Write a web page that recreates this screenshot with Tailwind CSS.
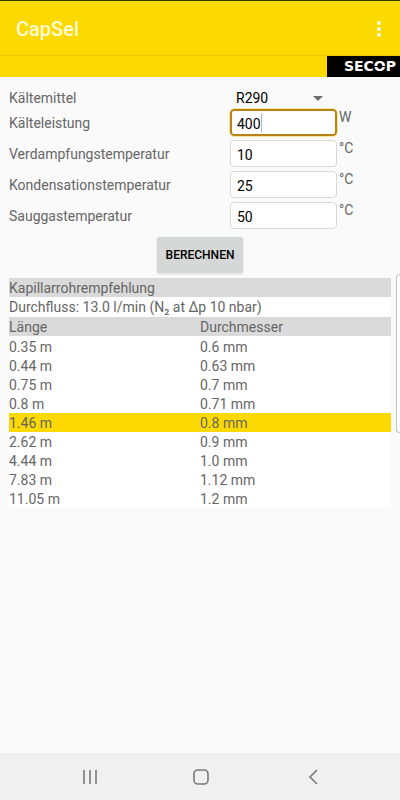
<!DOCTYPE html>
<html lang="de">
<head>
  <meta charset="UTF-8" />
  <title>CapSel</title>
  <meta name="viewport" content="width=device-width, initial-scale=1.0" />
  <script src="https://cdn.jsdelivr.net/npm/@tailwindcss/browser@4"></script>
</head>
<body class="relative flex flex-col min-h-screen bg-[#fafafa] text-sm text-[#666] font-['Roboto',sans-serif]">

  <!-- App bar -->
  <header class="flex items-center justify-between h-14 pt-0.5 pl-4 pr-[15px] bg-[#fcd900] border-t border-[#2b3a0a] border-b border-b-[#ecca00]">
    <h1 class="text-xl font-medium text-[#fffbd6]">CapSel</h1>
    <button type="button" aria-label="Menü" class="p-0">
      <svg width="12" height="18" viewBox="0 0 12 18" fill="#fffde8">
        <circle cx="6" cy="3" r="2" />
        <circle cx="6" cy="9" r="2" />
        <circle cx="6" cy="15" r="2" />
      </svg>
    </button>
  </header>

  <!-- Logo -->
  <div class="flex justify-end h-[21px] bg-[#fcd900]">
    <div class="relative w-[73px] pr-1 bg-black text-white text-right text-sm leading-[21px] font-bold font-['DejaVu_Sans',sans-serif]">
      SECOP
      <span class="absolute top-[10px] right-[15px] w-3 h-px bg-black"></span>
    </div>
  </div>

  <main class="flex-1 px-[9px] pt-2">
    <!-- Eingaben -->
    <form>
      <div class="grid grid-cols-[221px_107px_1fr] items-center leading-[19px]">
        <label for="refrigerant" class="pt-0.5">Kältemittel</label>
        <div class="relative">
          <select id="refrigerant" class="block appearance-none w-full h-6 pt-0.5 pl-[6px] text-black bg-transparent outline-none">
            <option>R290</option>
            <option>R600a</option>
            <option>R134a</option>
          </select>
          <svg class="absolute right-[14px] top-[11px] pointer-events-none" width="10" height="5" viewBox="0 0 10 5" fill="#6b6b6b">
            <path d="M0 0h10L5 5z" />
          </svg>
        </div>
        <span></span>
      </div>

      <div class="grid grid-cols-[221px_107px_1fr] gap-y-1 items-center leading-[19px]">
        <label for="capacity" class="pt-0.5">Kälteleistung</label>
        <div class="relative">
          <input id="capacity" type="text" value="400" class="block w-full h-[27px] pt-0.5 px-[5px] rounded-[4px] border-2 border-[#b98214] bg-white text-black caret-transparent outline-1 outline-[#fbe3a0]" />
          <span class="absolute left-[31px] top-1 w-px h-[19px] bg-[#b4b4d0]"></span>
        </div>
        <span class="self-start pl-[2px] -mt-px">W</span>

        <label for="evaporating" class="pt-0.5">Verdampfungstemperatur</label>
        <input id="evaporating" type="text" value="10" class="w-full h-[27px] pt-0.5 px-[6px] rounded-[4px] border border-[#d8d8d8] bg-white text-black" />
        <span class="self-start pl-[2px] -mt-px">°C</span>

        <label for="condensing" class="pt-0.5">Kondensationstemperatur</label>
        <input id="condensing" type="text" value="25" class="w-full h-[27px] pt-0.5 px-[6px] rounded-[4px] border border-[#d8d8d8] bg-white text-black" />
        <span class="self-start pl-[2px] -mt-px">°C</span>

        <label for="suction" class="pt-0.5">Sauggastemperatur</label>
        <input id="suction" type="text" value="50" class="w-full h-[27px] pt-0.5 px-[6px] rounded-[4px] border border-[#d8d8d8] bg-white text-black" />
        <span class="self-start pl-[2px] -mt-px">°C</span>
      </div>

      <div class="flex justify-center pt-2 pb-[5px]">
        <button type="button" class="h-9 px-2 rounded-[2px] bg-[#d6d7d7] text-black text-xs font-medium shadow-sm min-w-[86px]">BERECHNEN</button>
      </div>
    </form>

    <!-- Ergebnis -->
    <table class="w-full table-fixed bg-white text-left leading-[17px] [&_td]:pt-0.5 [&_th]:pt-0.5">
      <thead>
        <tr class="bg-[#dadada]"><th colspan="2" class="font-normal">Kapillarrohrempfehlung</th></tr>
        <tr><td colspan="2" class="pb-px">Durchfluss: 13.0 l/min (N₂ at Δp 10 nbar)</td></tr>
        <tr class="bg-[#dadada]"><th class="font-normal">Länge</th><th class="font-normal">Durchmesser</th></tr>
      </thead>
      <tbody class="border-t border-white">
        <tr><td>0.35 m</td><td>0.6 mm</td></tr>
        <tr><td>0.44 m</td><td>0.63 mm</td></tr>
        <tr><td>0.75 m</td><td>0.7 mm</td></tr>
        <tr><td>0.8 m</td><td>0.71 mm</td></tr>
        <tr class="bg-[#fcd900]"><td>1.46 m</td><td>0.8 mm</td></tr>
        <tr><td>2.62 m</td><td>0.9 mm</td></tr>
        <tr><td>4.44 m</td><td>1.0 mm</td></tr>
        <tr><td>7.83 m</td><td>1.12 mm</td></tr>
        <tr><td>11.05 m</td><td>1.2 mm</td></tr>
      </tbody>
    </table>
  </main>

  <!-- Edge Panel Griff -->
  <div class="absolute right-0 top-[274px] w-1 h-[159px] rounded-l-[4px] border border-r-0 border-[#c4c4c4] bg-white"></div>

  <!-- Navigationsleiste -->
  <nav class="grid grid-cols-[1fr_48px_1fr] items-center h-[47px] pl-0.5 bg-[#f0f0f0]">
    <button type="button" aria-label="Letzte Apps" class="flex justify-center">
      <svg width="16" height="16" viewBox="0 0 16 16" stroke="#7a7a7a" stroke-width="1.6" fill="none">
        <path d="M2 1v14M8 1v14M14 1v14" />
      </svg>
    </button>
    <button type="button" aria-label="Start" class="flex justify-center">
      <svg width="18" height="18" viewBox="0 0 18 18" stroke="#7a7a7a" stroke-width="1.6" fill="none">
        <rect x="2" y="2" width="14" height="14" rx="4" />
      </svg>
    </button>
    <button type="button" aria-label="Zurück" class="flex justify-center">
      <svg width="16" height="16" viewBox="0 0 16 16" stroke="#7a7a7a" stroke-width="1.6" fill="none">
        <path d="M12 1L5 8l7 7" />
      </svg>
    </button>
  </nav>

  <script>
    const capacity = document.getElementById("capacity");
    capacity.focus();
    capacity.setSelectionRange(3, 3);
  </script>
</body>
</html>
